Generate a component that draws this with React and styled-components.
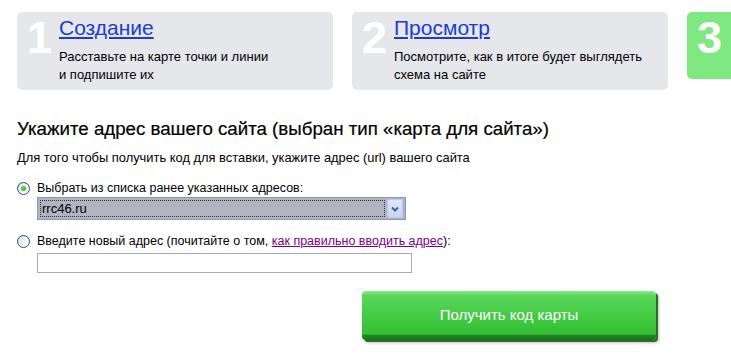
import React from 'react';
import styled, { createGlobalStyle } from 'styled-components';

const GlobalStyle = createGlobalStyle`
  html, body {
    margin: 0;
    padding: 0;
    background: #ffffff;
  }
  body {
    font-family: "Liberation Sans", Arial, sans-serif;
    color: #000000;
    overflow: hidden;
  }
`;

const Page = styled.div`
  width: 731px;
  height: 358px;
  overflow: hidden;
  padding: 12px 0 0 17px;
  box-sizing: border-box;
`;

const Steps = styled.div`
  display: flex;
  gap: 19px;
  width: 780px;
`;

const StepCard = styled.div`
  display: flex;
  flex: 0 0 auto;
  width: ${props => props.$active ? '70px' : '316px'};
  height: ${props => props.$active ? '67px' : '78px'};
  background-color: ${props => props.$active ? '#80e880' : '#e6e7eb'};
  border-radius: 5px;
  box-sizing: border-box;
  padding: 4px 0 0 10px;
`;

const StepNumber = styled.div`
  width: 32px;
  flex: 0 0 32px;
  font-size: 45px;
  font-weight: bold;
  line-height: 44px;
  color: #ffffff;
`;

const StepBody = styled.div`
  display: flex;
  flex-direction: column;
`;

const StepTitle = styled.a`
  font-size: 21px;
  line-height: 24px;
  color: #1a3ccf;
  text-decoration: underline;
  text-underline-offset: 2px;
  margin-bottom: 8px;
  align-self: flex-start;
`;

const StepText = styled.p`
  margin: 0;
  font-size: 13px;
  line-height: 18px;
`;

const Heading = styled.h2`
  margin: 27px 0 0;
  font-size: 18.7px;
  font-weight: normal;
  line-height: 24px;
  -webkit-text-stroke: 0.2px #000;
`;

const Hint = styled.p`
  margin: 9px 0 0;
  font-size: 12.9px;
  line-height: 16px;
`;

const Option = styled.div`
  margin-top: ${props => props.$first ? '14px' : '13px'};
`;

const RadioRow = styled.label`
  display: flex;
  align-items: center;
  gap: 7px;
  font-size: 12.5px;
  line-height: 16px;
`;

const Radio = styled.span`
  position: relative;
  width: 13px;
  height: 13px;
  box-sizing: border-box;
  border-radius: 50%;
  border: 1px solid #1c5180;
  background: linear-gradient(135deg, #dcdcd6 0%, #ffffff 80%);
  flex: 0 0 13px;

  &::after {
    content: "";
    display: ${props => props.$checked ? 'block' : 'none'};
    position: absolute;
    left: 3px;
    top: 3px;
    width: 5px;
    height: 5px;
    border-radius: 50%;
    background: radial-gradient(circle at 40% 40%, #5ee05e, #21a121);
  }
`;

const Link = styled.a`
  color: #800080;
  text-decoration: underline;
`;

const Field = styled.div`
  margin: ${props => props.$gap || 1}px 0 0 20px;
`;

const SelectBox = styled.div`
  position: relative;
  width: 369px;
  height: 23px;
  box-sizing: border-box;
  border: 1px solid #7f9db9;
  background: #b2b4c2;
  display: flex;
  align-items: center;
  padding: 2px;
`;

const SelectValue = styled.div`
  flex: 1;
  height: 17px;
  border: 1px dotted #333;
  box-sizing: border-box;
  font-size: 13px;
  line-height: 15px;
  padding-left: 1px;
`;

const SelectArrow = styled.div`
  width: 16px;
  height: 19px;
  margin-left: 2px;
  box-sizing: border-box;
  border: 1px solid #b9c9ef;
  border-radius: 2px;
  background: linear-gradient(#dfe8fb, #c4d3f6);
  display: flex;
  align-items: center;
  justify-content: center;
`;

const TextInput = styled.input`
  display: block;
  width: 375px;
  height: 20px;
  box-sizing: border-box;
  border: 1px solid #a5acb2;
  background: #fff;
  margin: 0;
  padding: 0 3px;
  font-family: inherit;
  font-size: 13px;
  outline: none;
`;

const Actions = styled.div`
  display: flex;
  padding-left: 345px;
  margin-top: 18px;
`;

const GetCodeButton = styled.button`
  width: 294px;
  height: 49px;
  border: none;
  border-radius: 4px;
  background: linear-gradient(#8ee98e 0%, #58d658 10%, #45cb45 50%, #34bf34 88%, #1f8a1f 90%, #17711a 100%);
  box-shadow: 2px 2px 0 #2a6a2a, 3px 3px 3px rgba(0, 0, 0, 0.25);
  color: #ffffff;
  font-family: inherit;
  font-size: 15px;
  padding-bottom: 3px;
  cursor: pointer;
`;

export default function App() {
  const steps = [
    { n: '1', title: 'Создание', text: ['Расставьте на карте точки и линии', 'и подпишите их'] },
    { n: '2', title: 'Просмотр', text: ['Посмотрите, как в итоге будет выглядеть', 'схема на сайте'] },
  ];

  return (
    <>
      <GlobalStyle />
      <Page>
        <Steps>
          {steps.map(step => (
            <StepCard key={step.n}>
              <StepNumber>{step.n}</StepNumber>
              <StepBody>
                <StepTitle href="#">{step.title}</StepTitle>
                <StepText>{step.text[0]}<br />{step.text[1]}</StepText>
              </StepBody>
            </StepCard>
          ))}
          <StepCard $active>
            <StepNumber>3</StepNumber>
          </StepCard>
        </Steps>

        <Heading>Укажите адрес вашего сайта (выбран тип «карта для сайта»)</Heading>
        <Hint>Для того чтобы получить код для вставки, укажите адрес (url) вашего сайта</Hint>

        <Option $first>
          <RadioRow>
            <Radio $checked />
            Выбрать из списка ранее указанных адресов:
          </RadioRow>
          <Field>
            <SelectBox>
              <SelectValue>rrc46.ru</SelectValue>
              <SelectArrow>
                <svg width="8" height="6" viewBox="0 0 8 6">
                  <path d="M1 1.5 L4 4.5 L7 1.5" stroke="#4d6185" strokeWidth="2" fill="none" />
                </svg>
              </SelectArrow>
            </SelectBox>
          </Field>
        </Option>

        <Option>
          <RadioRow>
            <Radio />
            <span>Введите новый адрес (почитайте о том, <Link href="#">как правильно вводить адрес</Link>):</span>
          </RadioRow>
          <Field $gap={4}>
            <TextInput type="text" />
          </Field>
        </Option>

        <Actions>
          <GetCodeButton>Получить код карты</GetCodeButton>
        </Actions>
      </Page>
    </>
  );
}
